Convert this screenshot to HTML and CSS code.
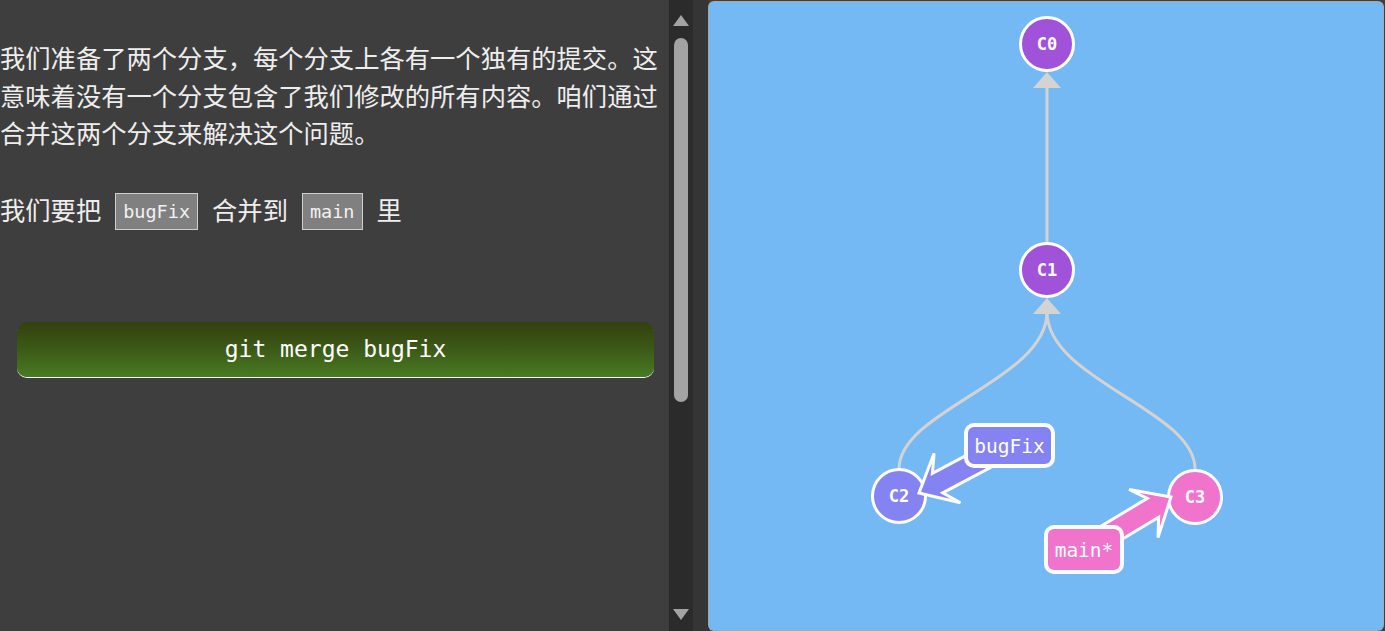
FILE: index.html
```html
<!DOCTYPE html>
<html lang="zh">
<head>
<meta charset="utf-8">
<title>git merge</title>
<link rel="stylesheet" href="styles.css">
</head>
<body>
<div class="app">
  <div class="left">
    <div class="content">
      <p class="para">我们准备了两个分支，每个分支上各有一个独有的提交。这意味着没有一个分支包含了我们修改的所有内容。咱们通过合并这两个分支来解决这个问题。</p>
      <p class="para para2">我们要把<code class="code">bugFix</code>合并到<code class="code">main</code>里</p>
      <div class="btn">git merge bugFix</div>
    </div>
  </div>
  <div class="scrollbar">
    <div class="sb-arrow sb-up"></div>
    <div class="sb-thumb"></div>
    <div class="sb-space"></div>
    <div class="sb-arrow sb-down"></div>
  </div>
  <div class="gap"></div>
  <div class="canvas">
    <svg class="graph" viewBox="709 2 674 628" width="674" height="628" xmlns="http://www.w3.org/2000/svg">
      <g class="edges">
        <line x1="1047" y1="86" x2="1047" y2="243" class="edge"/>
        <polygon points="1047,72 1033,88 1061,88" class="edge-head"/>
        <path d="M1047,312 C1047,380 899,410 899,469" class="edge"/>
        <path d="M1047,312 C1047,380 1195,410 1195,469" class="edge"/>
        <polygon points="1047,298 1033,314 1061,314" class="edge-head"/>
      </g>
      <g class="nodes">
        <circle cx="1047" cy="44" r="26.5" class="node purple"/>
        <text x="1047" y="44" class="node-text">C0</text>
        <circle cx="1047" cy="270" r="26.5" class="node purple"/>
        <text x="1047" y="270" class="node-text">C1</text>
        <circle cx="899" cy="496" r="26.5" class="node blue"/>
        <text x="899" y="496" class="node-text">C2</text>
        <circle cx="1195" cy="497" r="26.5" class="node pink"/>
        <text x="1195" y="497" class="node-text">C3</text>
      </g>
      <g class="branches">
        <polygon points="0,0 -32,-28 -21,-11 -100,-11 -100,11 -21,11 -32,28" transform="translate(919,493) rotate(152)" class="barrow blue"/>
        <rect x="966" y="425" width="87" height="41" rx="8" class="blabel blue"/>
        <text x="1009.5" y="446" class="btext">bugFix</text>
        <polygon points="0,0 -32,-28 -21,-11 -100,-11 -100,11 -21,11 -32,28" transform="translate(1171,497) rotate(-31)" class="barrow pink"/>
        <rect x="1046" y="527" width="76" height="45" rx="8" class="blabel pink"/>
        <text x="1084" y="550" class="btext">main*</text>
      </g>
    </svg>
  </div>
</div>
</body>
</html>
```

FILE: styles.css
```css
html, body {
  margin: 0;
  padding: 0;
  width: 1385px;
  height: 631px;
  overflow: hidden;
  background: #3e3e3e;
}

.app {
  display: flex;
  width: 1385px;
  height: 631px;
}

.left {
  width: 669px;
  flex: none;
  background: #3e3e3e;
  overflow: hidden;
}

.content {
  padding-top: 39px;
}

.para {
  margin: 0;
  width: 668px;
  font-family: "Noto Sans CJK SC", "Noto Sans", sans-serif;
  font-size: 25.3px;
  line-height: 37.5px;
  color: #eeeeee;
}

.para2 {
  margin-top: 39px;
}

.code {
  display: inline-block;
  vertical-align: middle;
  box-sizing: border-box;
  height: 37px;
  line-height: 35px;
  padding: 0 7px;
  margin: 0 14px;
  border: 1px solid #cfcfcf;
  background: #808080;
  color: #f2f2f2;
  font-family: "DejaVu Sans Mono", monospace;
  font-size: 18.5px;
  position: relative;
  top: -1px;
}

.btn {
  margin: 91px 0 0 17px;
  width: 637px;
  height: 55px;
  border-radius: 10px;
  background: linear-gradient(to bottom, #35400f 0%, #3b5716 45%, #487b22 100%);
  box-shadow: 0 1px 0 #ffffff;
  color: #ffffff;
  text-align: center;
  font-family: "DejaVu Sans Mono", monospace;
  font-size: 23px;
  line-height: 55px;
}

.scrollbar {
  width: 24px;
  flex: none;
  background: #2b2b2b;
  display: flex;
  flex-direction: column;
  align-items: center;
}

.sb-arrow {
  width: 0;
  height: 0;
  border-left: 8px solid transparent;
  border-right: 8px solid transparent;
  flex: none;
}

.sb-up {
  margin-top: 15px;
  border-bottom: 11px solid #a3a3a3;
}

.sb-down {
  margin-bottom: 11px;
  border-top: 11px solid #a3a3a3;
}

.sb-thumb {
  margin-top: 12px;
  width: 14px;
  height: 364px;
  border-radius: 7px;
  background: #a3a3a3;
  flex: none;
}

.sb-space {
  flex: 1;
}

.gap {
  width: 16px;
  flex: none;
  background: #353535;
}

.canvas {
  width: 674px;
  height: 628px;
  margin-top: 2px;
  flex: none;
  box-sizing: border-box;
  background: #74b8f4;
  border-radius: 5px;
  overflow: hidden;
  box-shadow: 0 0 0 1px rgba(255, 255, 255, 0.55);
}

.graph {
  display: block;
}

.edge {
  fill: none;
  stroke: #d3d3d3;
  stroke-width: 3;
}

.edge-head {
  fill: #d3d3d3;
}

.node {
  stroke: #ffffff;
  stroke-width: 3;
}

.purple { fill: #a052d8; }
.blue { fill: #8583f2; }
.pink { fill: #f073cc; }

.node-text {
  fill: #ffffff;
  font-family: "DejaVu Sans Mono", monospace;
  font-weight: bold;
  font-size: 17px;
  text-anchor: middle;
  dominant-baseline: central;
}

.barrow {
  stroke: #ffffff;
  stroke-width: 3;
  stroke-linejoin: miter;
}

.blabel {
  stroke: #ffffff;
  stroke-width: 4;
}

.btext {
  fill: #ffffff;
  font-family: "DejaVu Sans Mono", monospace;
  font-size: 19.5px;
  text-anchor: middle;
  dominant-baseline: central;
}
```
